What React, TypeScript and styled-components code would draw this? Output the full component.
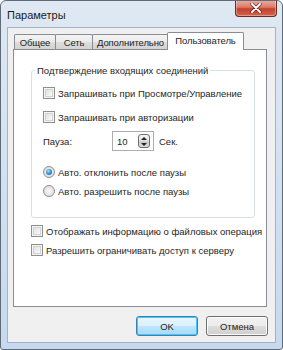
import React from "react";
import styled, { createGlobalStyle } from "styled-components";

const Global = createGlobalStyle`
  html, body { margin: 0; padding: 0; background: #ffffff; }
  body { font-family: "Liberation Sans", Arial, sans-serif; font-size: 9.5px; color: #1e1e1e; }
  * { box-sizing: border-box; }
`;

const Window = styled.div`
  width: 283px;
  height: 350px;
  border: 1px solid #5f6b78;
  border-radius: 6px 6px 3px 3px;
  background: linear-gradient(to bottom, #dfe8f2 0%, #d5e3f1 40%, #c6d9ee 100%);
  display: flex;
  flex-direction: column;
  overflow: hidden;
`;

const TitleBar = styled.div`
  height: 26px;
  flex: none;
  display: flex;
  align-items: flex-start;
  padding: 0 5px 0 6px;
`;

const Title = styled.div`
  margin-top: 8px;
  font-size: 11px;
  line-height: 13px;
  color: #1a1a1a;
  flex: 1;
`;

const CloseButton = styled.div`
  width: 42px;
  height: 17px;
  margin-top: -1px;
  border: 1px solid #6b2a25;
  border-top: none;
  border-radius: 0 0 4px 4px;
  background: linear-gradient(to bottom, #eab0a4 0%, #dc7a69 45%, #c4412c 55%, #d2654e 100%);
  display: flex;
  align-items: center;
  justify-content: center;
  box-shadow: inset 0 0 0 1px rgba(255, 255, 255, 0.35);
`;

const Client = styled.div`
  height: 316px;
  flex: none;
  margin: 0 6px 6px 6px;
  background: #f0f0f0;
  border: 1px solid #9fb3c9;
  display: flex;
  flex-direction: column;
  align-items: flex-start;
  padding: 4px 7px 0 5px;
`;

const TabRow = styled.div`
  display: flex;
  align-items: flex-end;
  height: 17px;
  padding-left: 1px;
  position: relative;
  z-index: 1;
`;

const Tab = styled.div<{ $active?: boolean; $w: number }>`
  width: ${(p) => p.$w}px;
  height: ${(p) => (p.$active ? 18 : 15)}px;
  margin-left: ${(p) => (p.$active ? -2 : -1)}px;
  margin-bottom: ${(p) => (p.$active ? -1 : 0)}px;
  &:first-child { margin-left: 0; }
  border: 1px solid #898c95;
  border-bottom: none;
  border-radius: 2px 2px 0 0;
  position: relative;
  z-index: ${(p) => (p.$active ? 2 : 1)};
  background: ${(p) =>
    p.$active ? "#ffffff" : "linear-gradient(to bottom, #f3f3f3 0%, #ebebeb 50%, #dedede 51%, #d3d3d3 100%)"};
  display: flex;
  align-items: center;
  justify-content: center;
  white-space: nowrap;
  font-size: 9.5px;
  letter-spacing: -0.1px;
  padding-bottom: ${(p) => (p.$active ? 2 : 0)}px;
`;

const Panel = styled.div`
  width: 254px;
  height: 258px;
  flex: none;
  background: #ffffff;
  border: 1px solid #898c95;
  padding: 14px 11px 0 17px;
  display: flex;
  flex-direction: column;
`;

const Group = styled.fieldset`
  margin: 0;
  padding: 0 4px 0 0;
  border: 1px solid #d5dfe5;
  border-radius: 3px;
  height: 154px;
  min-width: 0;
`;

const Legend = styled.legend`
  padding: 0 2px;
  margin-left: 3px;
  font-size: 9.5px;
  line-height: 13px;
`;

const GroupBody = styled.div`
  padding: 4px 0 0 11px;
  display: flex;
  flex-direction: column;
`;

const Row = styled.div<{ $h: number; $top?: number }>`
  height: ${(p) => p.$h}px;
  margin-top: ${(p) => p.$top ?? 0}px;
  display: flex;
  align-items: center;
  gap: 2px;
  white-space: nowrap;
`;

const Check = styled.span`
  width: 12px;
  height: 12px;
  margin-right: 1px;
  border: 1px solid #8e8f8f;
  background: linear-gradient(135deg, #d8d8d8 0%, #f2f2f2 60%, #ffffff 100%);
  box-shadow: inset 0 0 0 1px #f4f4f4, inset 0 0 0 2px #d3d3d3;
  flex: none;
`;

const Radio = styled.span<{ $on?: boolean }>`
  width: 12px;
  height: 12px;
  margin-right: 1px;
  border-radius: 50%;
  border: 1px solid #8e8f8f;
  background: radial-gradient(circle at 50% 50%, #f8f8f8 0%, #e4e4e4 60%, #d3d3d3 100%);
  flex: none;
  display: flex;
  align-items: center;
  justify-content: center;
  &::after {
    content: "";
    display: ${(p) => (p.$on ? "block" : "none")};
    width: 6px;
    height: 6px;
    border-radius: 50%;
    background: radial-gradient(circle at 40% 35%, #a8e6ff 0%, #2e8fd8 50%, #1b4f9c 100%);
  }
`;

const PauseLabel = styled.span`
  width: 67px;
`;

const Spin = styled.div`
  width: 42px;
  height: 20px;
  border: 1px solid #abadb3;
  background: #fff;
  display: flex;
  align-items: center;
  justify-content: space-between;
  padding: 0 3px 0 4px;
`;

const SpinBtn = styled.div`
  width: 12px;
  height: 14px;
  border: 1px solid #6f6f6f;
  border-radius: 3px;
  background: linear-gradient(to bottom, #f4f4f4 0%, #e4e4e4 48%, #cdcdcd 52%, #dcdcdc 100%);
  display: flex;
  flex-direction: column;
  align-items: center;
  justify-content: space-around;
`;

const Arrow = styled.span<{ $down?: boolean }>`
  width: 0;
  height: 0;
  border-left: 3px solid transparent;
  border-right: 3px solid transparent;
  ${(p) => (p.$down ? "border-top: 3px solid #222;" : "border-bottom: 3px solid #222;")}
`;

const Unit = styled.span`
  margin-left: 3px;
`;

const Outer = styled.div`
  display: flex;
  flex-direction: column;
  margin-top: 3px;
`;

const Buttons = styled.div`
  align-self: stretch;
  display: flex;
  justify-content: flex-end;
  gap: 8px;
  margin-top: 9px;
`;

const Button = styled.div<{ $def?: boolean }>`
  width: 62px;
  height: 20px;
  border: 1px solid ${(p) => (p.$def ? "#3c7fb1" : "#707070")};
  border-radius: 3px;
  background: ${(p) =>
    p.$def
      ? "linear-gradient(to bottom, #eaf6fd 0%, #d9f0fc 50%, #bee6fd 51%, #a7d9f5 100%)"
      : "linear-gradient(to bottom, #f2f2f2 0%, #ebebeb 50%, #dddddd 51%, #cfcfcf 100%)"};
  box-shadow: inset 0 0 0 1px ${(p) => (p.$def ? "#48c6f8" : "#fcfcfc")};
  display: flex;
  align-items: center;
  justify-content: center;
  font-size: 9.5px;
`;

export default function App() {
  return (
    <>
      <Global />
      <Window>
        <TitleBar>
          <Title>Параметры</Title>
          <CloseButton>
            <svg width="12" height="10" viewBox="0 0 12 10">
              <path d="M2 1 L10 9 M10 1 L2 9" stroke="#5a1a14" strokeWidth="3.2" strokeLinecap="round" />
              <path d="M2 1 L10 9 M10 1 L2 9" stroke="#ffffff" strokeWidth="2" strokeLinecap="round" />
            </svg>
          </CloseButton>
        </TitleBar>
        <Client>
          <TabRow>
            <Tab $w={42}>Общее</Tab>
            <Tab $w={38}>Сеть</Tab>
            <Tab $w={77}>Дополнительно</Tab>
            <Tab $active $w={77}>Пользователь</Tab>
          </TabRow>
          <Panel>
            <Group>
              <Legend>Подтверждение входящих соединений</Legend>
              <GroupBody>
                <Row $h={24}>
                  <Check />
                  <span>Запрашивать при Просмотре/Управление</span>
                </Row>
                <Row $h={24}>
                  <Check />
                  <span>Запрашивать при авторизации</span>
                </Row>
                <Row $h={24}>
                  <PauseLabel>Пауза:</PauseLabel>
                  <Spin>
                    <span>10</span>
                    <SpinBtn>
                      <Arrow />
                      <Arrow $down />
                    </SpinBtn>
                  </Spin>
                  <Unit>Сек.</Unit>
                </Row>
                <Row $h={20} $top={9}>
                  <Radio $on />
                  <span>Авто. отклонить после паузы</span>
                </Row>
                <Row $h={18}>
                  <Radio />
                  <span>Авто. разрешить после паузы</span>
                </Row>
              </GroupBody>
            </Group>
            <Outer>
              <Row $h={20}>
                <Check />
                <span>Отображать информацию о файловых операция</span>
              </Row>
              <Row $h={18}>
                <Check />
                <span>Разрешить ограничивать доступ к серверу</span>
              </Row>
            </Outer>
          </Panel>
          <Buttons>
            <Button $def>OK</Button>
            <Button>Отмена</Button>
          </Buttons>
        </Client>
      </Window>
    </>
  );
}
